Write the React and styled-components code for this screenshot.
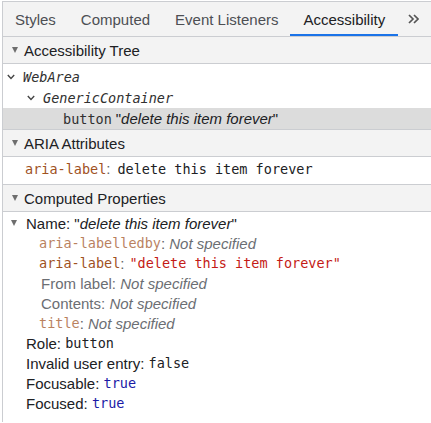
import React from "react";
import styled, {createGlobalStyle} from "styled-components";

const GlobalStyle = createGlobalStyle`
  body {
    margin: 0;
    background: #fff;
    font-family: "Liberation Sans", Arial, sans-serif;
    color: #202124;
  }
`;

const MONO = `"DejaVu Sans Mono", "Liberation Mono", monospace`;

const Panel = styled.div`
  margin: 1px 0 0 2px;
  border-top: 1px solid #cbcdd1;
  border-left: 1px solid #cbcdd1;
  min-height: 420px;
`;

const TabBar = styled.div`
  display: flex;
  height: 34px;
  background: #f3f3f3;
  border-bottom: 1px solid #cbcdd1;
`;

const Tab = styled.div`
  display: flex;
  align-items: center;
  padding: 0 ${p => p.$pad || 12}px;
  font-size: 15px;
  white-space: nowrap;
  color: ${p => (p.$active ? "#202124" : "#4d4f53")};
  box-shadow: ${p => (p.$active ? "inset 0 -2px 0 #1a73e8" : "none")};
`;

const More = styled.div`
  display: flex;
  align-items: center;
  padding: 0 0 0 10px;
`;

const SectionHeader = styled.div`
  display: flex;
  align-items: center;
  gap: 6px;
  height: 26px;
  padding-left: 9px;
  background: #f3f3f3;
  font-size: 15px;
  border-top: ${p => (p.$first ? "none" : "1px solid #cbcdd1")};
  border-bottom: 1px solid #cbcdd1;
`;

const Triangle = styled.span`
  display: inline-block;
  width: 0;
  height: 0;
  border-left: 3.5px solid transparent;
  border-right: 3.5px solid transparent;
  border-top: 6px solid #6e6e6e;
  flex: none;
`;

const TreeBody = styled.div`
  padding-top: 2px;
`;

const TreeRow = styled.div`
  display: flex;
  align-items: center;
  height: 21px;
  padding-left: ${p => 4 + p.$depth * 20}px;
  background: ${p => (p.$selected ? "#dcdcdc" : "transparent")};
  white-space: nowrap;
`;

const ChevronSlot = styled.span`
  display: inline-flex;
  align-items: center;
  width: 16px;
  flex: none;
`;

const Role = styled.span`
  font-family: ${MONO};
  font-size: 13.5px;
  font-style: ${p => (p.$italic ? "italic" : "normal")};
  color: #303030;
`;

const Quoted = styled.span`
  font-size: 15px;
  margin-left: 4px;
  color: #202124;
  em {
    font-style: italic;
  }
`;

const AttrBody = styled.div`
  padding: 2px 0 5px 22px;
  line-height: 20px;
`;

const Line = styled.div`
  display: flex;
  align-items: center;
  height: 20px;
  white-space: pre;
  padding-left: ${p => p.$indent || 0}px;
  font-size: 15px;
`;

const AttrName = styled.span`
  font-family: ${MONO};
  font-size: 13.5px;
  color: #a0521f;
  opacity: ${p => (p.$dim ? 0.72 : 1)};
`;

const Colon = styled.span`
  font-size: 15px;
  color: #5f6368;
  white-space: pre;
`;

const MonoValue = styled.span`
  font-family: ${MONO};
  font-size: 13.5px;
  margin-left: ${p => p.$gap || 0}px;
  color: ${p => p.$color || "#202124"};
`;

const Muted = styled.span`
  color: #6b6e73;
  white-space: pre;
  font-style: ${p => (p.$italic ? "italic" : "normal")};
`;

const ComputedBody = styled.div`
  padding-top: 1px;
`;

const NameText = styled.span`
  margin-left: 9px;
`;

const ChevronDown = () => (
  <svg width="8" height="6" viewBox="0 0 8 6">
    <polyline points="0.8,1 4,4.4 7.2,1" fill="none" stroke="#444" strokeWidth="1.4"/>
  </svg>
);

const DoubleChevron = () => (
  <svg width="11" height="10" viewBox="0 0 11 10">
    <polyline points="1,1 5,5 1,9" fill="none" stroke="#555" strokeWidth="1.7"/>
    <polyline points="6,1 10,5 6,9" fill="none" stroke="#555" strokeWidth="1.7"/>
  </svg>
);

const tabs = [
  {label: "Styles", pad: 12},
  {label: "Computed", pad: 13},
  {label: "Event Listeners", pad: 12},
  {label: "Accessibility", pad: 13, active: true},
];

const tree = [
  {depth: 0, role: "WebArea", italic: true, open: true},
  {depth: 1, role: "GenericContainer", italic: true, open: true},
  {depth: 2, role: "button", name: "delete this item forever", selected: true},
];

const App = () => (
  <Panel>
    <GlobalStyle/>
    <TabBar>
      {tabs.map(t => <Tab key={t.label} $pad={t.pad} $active={t.active}>{t.label}</Tab>)}
      <More><DoubleChevron/></More>
    </TabBar>

    <SectionHeader $first><Triangle/>Accessibility Tree</SectionHeader>
    <TreeBody>
      {tree.map(node => (
        <TreeRow key={node.role} $depth={node.depth} $selected={node.selected}>
          <ChevronSlot>{node.open && <ChevronDown/>}</ChevronSlot>
          <Role $italic={node.italic}>{node.role}</Role>
          {node.name && <Quoted>"<em>{node.name}</em>"</Quoted>}
        </TreeRow>
      ))}
    </TreeBody>

    <SectionHeader><Triangle/>ARIA Attributes</SectionHeader>
    <AttrBody>
      <Line>
        <AttrName>aria-label</AttrName>
        <Colon>:</Colon>
        <MonoValue $gap={7}>delete this item forever</MonoValue>
      </Line>
    </AttrBody>

    <SectionHeader><Triangle/>Computed Properties</SectionHeader>
    <ComputedBody>
      <Line $indent={8}>
        <Triangle/>
        <NameText>Name: "<em>delete this item forever</em>"</NameText>
      </Line>
      <Line $indent={36}>
        <AttrName $dim>aria-labelledby</AttrName>
        <Colon>: </Colon>
        <Muted $italic>Not specified</Muted>
      </Line>
      <Line $indent={36}>
        <AttrName>aria-label</AttrName>
        <Colon>:</Colon>
        <MonoValue $gap={5} $color="#c41a16">"delete this item forever"</MonoValue>
      </Line>
      <Line $indent={38}>
        <Muted>From label: </Muted>
        <Muted $italic>Not specified</Muted>
      </Line>
      <Line $indent={38}>
        <Muted>Contents: </Muted>
        <Muted $italic>Not specified</Muted>
      </Line>
      <Line $indent={36}>
        <AttrName $dim>title</AttrName>
        <Colon>: </Colon>
        <Muted $italic>Not specified</Muted>
      </Line>
      <Line $indent={23}>
        Role: <MonoValue>button</MonoValue>
      </Line>
      <Line $indent={23}>
        Invalid user entry: <MonoValue>false</MonoValue>
      </Line>
      <Line $indent={23}>
        Focusable: <MonoValue $color="#1a1aa6">true</MonoValue>
      </Line>
      <Line $indent={23}>
        Focused: <MonoValue $color="#1a1aa6">true</MonoValue>
      </Line>
    </ComputedBody>
  </Panel>
);

export default App;
